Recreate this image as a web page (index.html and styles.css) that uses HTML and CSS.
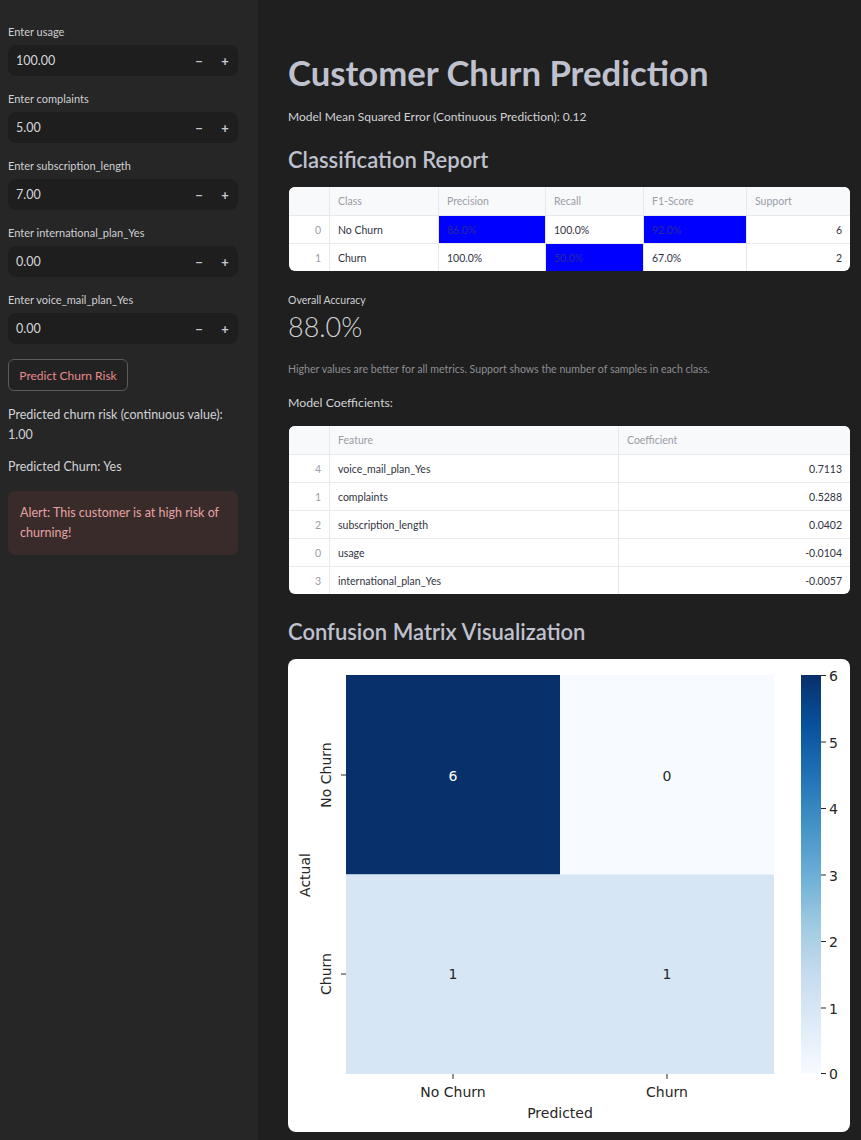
FILE: index.html
```html
<!DOCTYPE html>
<html>
<head>
<meta charset="utf-8">
<link rel="stylesheet" href="styles.css">
</head>
<body>
<div class="app">
  <aside class="sidebar">
    <div class="field">
      <label class="field-label">Enter usage</label>
      <div class="num-input"><span class="num-value">100.00</span><span class="step">&#8722;</span><span class="step">+</span></div>
    </div>
    <div class="field">
      <label class="field-label">Enter complaints</label>
      <div class="num-input"><span class="num-value">5.00</span><span class="step">&#8722;</span><span class="step">+</span></div>
    </div>
    <div class="field">
      <label class="field-label">Enter subscription_length</label>
      <div class="num-input"><span class="num-value">7.00</span><span class="step">&#8722;</span><span class="step">+</span></div>
    </div>
    <div class="field">
      <label class="field-label">Enter international_plan_Yes</label>
      <div class="num-input"><span class="num-value">0.00</span><span class="step">&#8722;</span><span class="step">+</span></div>
    </div>
    <div class="field">
      <label class="field-label">Enter voice_mail_plan_Yes</label>
      <div class="num-input"><span class="num-value">0.00</span><span class="step">&#8722;</span><span class="step">+</span></div>
    </div>
    <button class="predict-btn">Predict Churn Risk</button>
    <p class="side-text risk">Predicted churn risk (continuous value):<br>1.00</p>
    <p class="side-text churn">Predicted Churn: Yes</p>
    <div class="alert">Alert: This customer is at high risk of churning!</div>
  </aside>

  <main class="main">
    <h1 class="title">Customer Churn Prediction</h1>
    <p class="body-text mse">Model Mean Squared Error (Continuous Prediction): 0.12</p>
    <h3 class="subheader report-h">Classification Report</h3>

    <div class="table-wrap report">
      <div class="row head">
        <div class="cell idx"></div>
        <div class="cell">Class</div>
        <div class="cell">Precision</div>
        <div class="cell">Recall</div>
        <div class="cell">F1-Score</div>
        <div class="cell">Support</div>
      </div>
      <div class="row">
        <div class="cell idx">0</div>
        <div class="cell">No Churn</div>
        <div class="cell hi">86.0%</div>
        <div class="cell">100.0%</div>
        <div class="cell hi">92.0%</div>
        <div class="cell num">6</div>
      </div>
      <div class="row">
        <div class="cell idx">1</div>
        <div class="cell">Churn</div>
        <div class="cell">100.0%</div>
        <div class="cell hi">50.0%</div>
        <div class="cell">67.0%</div>
        <div class="cell num">2</div>
      </div>
    </div>

    <div class="metric">
      <div class="metric-label">Overall Accuracy</div>
      <div class="metric-value">88.0%</div>
    </div>
    <p class="caption">Higher values are better for all metrics. Support shows the number of samples in each class.</p>
    <p class="body-text coef-h">Model Coefficients:</p>

    <div class="table-wrap coef">
      <div class="row head">
        <div class="cell idx"></div>
        <div class="cell">Feature</div>
        <div class="cell">Coefficient</div>
      </div>
      <div class="row"><div class="cell idx">4</div><div class="cell">voice_mail_plan_Yes</div><div class="cell num">0.7113</div></div>
      <div class="row"><div class="cell idx">1</div><div class="cell">complaints</div><div class="cell num">0.5288</div></div>
      <div class="row"><div class="cell idx">2</div><div class="cell">subscription_length</div><div class="cell num">0.0402</div></div>
      <div class="row"><div class="cell idx">0</div><div class="cell">usage</div><div class="cell num">-0.0104</div></div>
      <div class="row"><div class="cell idx">3</div><div class="cell">international_plan_Yes</div><div class="cell num">-0.0057</div></div>
    </div>

    <h3 class="subheader cm-h">Confusion Matrix Visualization</h3>

    <div class="chart">
      <svg class="chart-svg" width="562" height="473" viewBox="0 0 562 473" xmlns="http://www.w3.org/2000/svg">
        <defs>
          <linearGradient id="blues" x1="0" y1="1" x2="0" y2="0">
            <stop offset="0" stop-color="#f7fbff"/>
            <stop offset="0.125" stop-color="#deebf7"/>
            <stop offset="0.25" stop-color="#c6dbef"/>
            <stop offset="0.375" stop-color="#9ecae1"/>
            <stop offset="0.5" stop-color="#6baed6"/>
            <stop offset="0.625" stop-color="#4292c6"/>
            <stop offset="0.75" stop-color="#2171b5"/>
            <stop offset="0.875" stop-color="#08519c"/>
            <stop offset="1" stop-color="#08306b"/>
          </linearGradient>
        </defs>
        <g font-family="DejaVu Sans, sans-serif" font-size="14" fill="#262626">
          <rect x="58" y="16" width="214" height="199.5" fill="#08306b"/>
          <rect x="272" y="16" width="214" height="199.5" fill="#f7fbff"/>
          <rect x="58" y="215.5" width="214" height="199.5" fill="#d6e6f4"/>
          <rect x="272" y="215.5" width="214" height="199.5" fill="#d6e6f4"/>

          <text x="165" y="122" text-anchor="middle" fill="#ffffff">6</text>
          <text x="379" y="122" text-anchor="middle">0</text>
          <text x="165" y="320" text-anchor="middle">1</text>
          <text x="379" y="320" text-anchor="middle">1</text>

          <line x1="53" y1="116" x2="58" y2="116" stroke="#262626" stroke-width="1"/>
          <line x1="53" y1="315" x2="58" y2="315" stroke="#262626" stroke-width="1"/>
          <text transform="translate(43 116) rotate(-90)" text-anchor="middle">No Churn</text>
          <text transform="translate(43 315) rotate(-90)" text-anchor="middle">Churn</text>
          <text transform="translate(22 216) rotate(-90)" text-anchor="middle">Actual</text>

          <line x1="165" y1="415" x2="165" y2="420" stroke="#262626" stroke-width="1"/>
          <line x1="379" y1="415" x2="379" y2="420" stroke="#262626" stroke-width="1"/>
          <text x="165" y="438" text-anchor="middle">No Churn</text>
          <text x="379" y="438" text-anchor="middle">Churn</text>
          <text x="272" y="459" text-anchor="middle">Predicted</text>

          <rect x="513" y="16" width="20" height="399" fill="url(#blues)"/>
          <g stroke="#262626" stroke-width="1">
            <line x1="533" y1="16.5" x2="538" y2="16.5"/>
            <line x1="533" y1="83" x2="538" y2="83"/>
            <line x1="533" y1="149.5" x2="538" y2="149.5"/>
            <line x1="533" y1="216" x2="538" y2="216"/>
            <line x1="533" y1="282.5" x2="538" y2="282.5"/>
            <line x1="533" y1="349" x2="538" y2="349"/>
            <line x1="533" y1="414.5" x2="538" y2="414.5"/>
          </g>
          <text x="541" y="22">6</text>
          <text x="541" y="88.5">5</text>
          <text x="541" y="155">4</text>
          <text x="541" y="221.5">3</text>
          <text x="541" y="288">2</text>
          <text x="541" y="354.5">1</text>
          <text x="541" y="420">0</text>
        </g>
      </svg>
    </div>
  </main>
</div>
</body>
</html>
```

FILE: styles.css
```css
* { box-sizing: border-box; }

html, body {
  margin: 0;
  padding: 0;
  background: #1f1f1f;
  font-family: "Lato", "Open Sans", sans-serif;
  color: #d2d2d6;
}

.app {
  display: flex;
  min-height: 1140px;
}

/* Sidebar */
.sidebar {
  width: 258px;
  flex: 0 0 258px;
  background: #262626;
  padding: 24px 20px 0 8px;
  display: flex;
  flex-direction: column;
}

.field {
  display: flex;
  flex-direction: column;
  margin-bottom: 15px;
}

.field-label {
  font-size: 11px;
  line-height: 16px;
  color: #d0d0d4;
  margin-bottom: 5px;
}

.num-input {
  height: 31px;
  background: #1e1e1e;
  border-radius: 8px;
  display: flex;
  align-items: center;
  padding-left: 8px;
}

.num-value {
  flex: 1;
  font-size: 12.5px;
  color: #d6d6da;
}

.step {
  width: 26px;
  text-align: center;
  font-size: 13px;
  font-weight: 700;
  color: #c9c9d2;
}

.predict-btn {
  align-self: flex-start;
  margin-top: 0;
  height: 32px;
  width: 120px;
  background: #222222;
  border: 1px solid #5c5c5c;
  border-radius: 6px;
  color: #e88a8a;
  font-family: inherit;
  font-size: 12px;
  padding: 0;
}

.side-text {
  margin: 0;
  font-size: 12.5px;
  line-height: 20px;
  color: #d2d2d6;
}

.side-text.risk { margin-top: 14px; }
.side-text.churn { margin-top: 12px; }

.alert {
  margin-top: 14px;
  background: #3a2b2b;
  border-radius: 7px;
  padding: 12px 12px 12px 12px;
  font-size: 12.5px;
  line-height: 20px;
  color: #e6a3a3;
}

/* Main */
.main {
  flex: 1;
  padding: 52px 11px 0 30px;
  display: flex;
  flex-direction: column;
}

.title {
  margin: 0;
  font-size: 34.7px;
  line-height: 42px;
  font-weight: 700;
  color: #bfc1ce;
}

.body-text {
  margin: 0;
  font-size: 12px;
  line-height: 20px;
  color: #d2d2d6;
}

.mse { margin-top: 13px; }

.subheader {
  margin: 0;
  font-size: 22px;
  line-height: 28px;
  font-weight: 600;
  color: #bfc1ce;
}

.report-h { margin-top: 19px; }

.table-wrap {
  margin-top: 13px;
  margin-left: 1px;
  background: #ffffff;
  border-radius: 6px;
  overflow: hidden;
  display: flex;
  flex-direction: column;
  font-size: 10.5px;
  color: #31333f;
}

.row {
  display: grid;
  height: 28px;
  border-top: 1px solid #e8e9ec;
}

.row.head {
  border-top: none;
  height: 28px;
  background: #f8f9fb;
  color: #9a9ca6;
}

.report .row { grid-template-columns: 40px 109px 107px 98px 103px 1fr; }
.coef .row { grid-template-columns: 40px 289px 1fr; }

.cell {
  display: flex;
  align-items: center;
  padding: 0 8px;
  border-left: 1px solid #e8e9ec;
  white-space: nowrap;
}

.cell.idx {
  border-left: none;
  justify-content: flex-end;
  color: #9a9ca6;
}

.cell.num { justify-content: flex-end; }

.cell.hi {
  background: #0000ff;
  color: #2a2a9a;
}

.metric {
  margin-top: 21px;
  display: flex;
  flex-direction: column;
}

.metric-label {
  font-size: 10.5px;
  line-height: 16px;
  color: #d0d0d4;
}

.metric-value {
  margin-top: 2px;
  font-size: 27px;
  line-height: 34px;
  font-weight: 300;
  color: #d2d2d6;
}

.caption {
  margin: 17px 0 0 0;
  font-size: 10.6px;
  line-height: 16px;
  color: #8d8d93;
}

.body-text.coef-h {
  margin-top: 16px;
  font-size: 12.3px;
}

.cm-h { margin-top: 24px; }

.chart {
  margin-top: 13px;
  width: 562px;
  height: 473px;
  background: #ffffff;
  border-radius: 8px;
  overflow: hidden;
}

.chart-svg { display: block; }
```
